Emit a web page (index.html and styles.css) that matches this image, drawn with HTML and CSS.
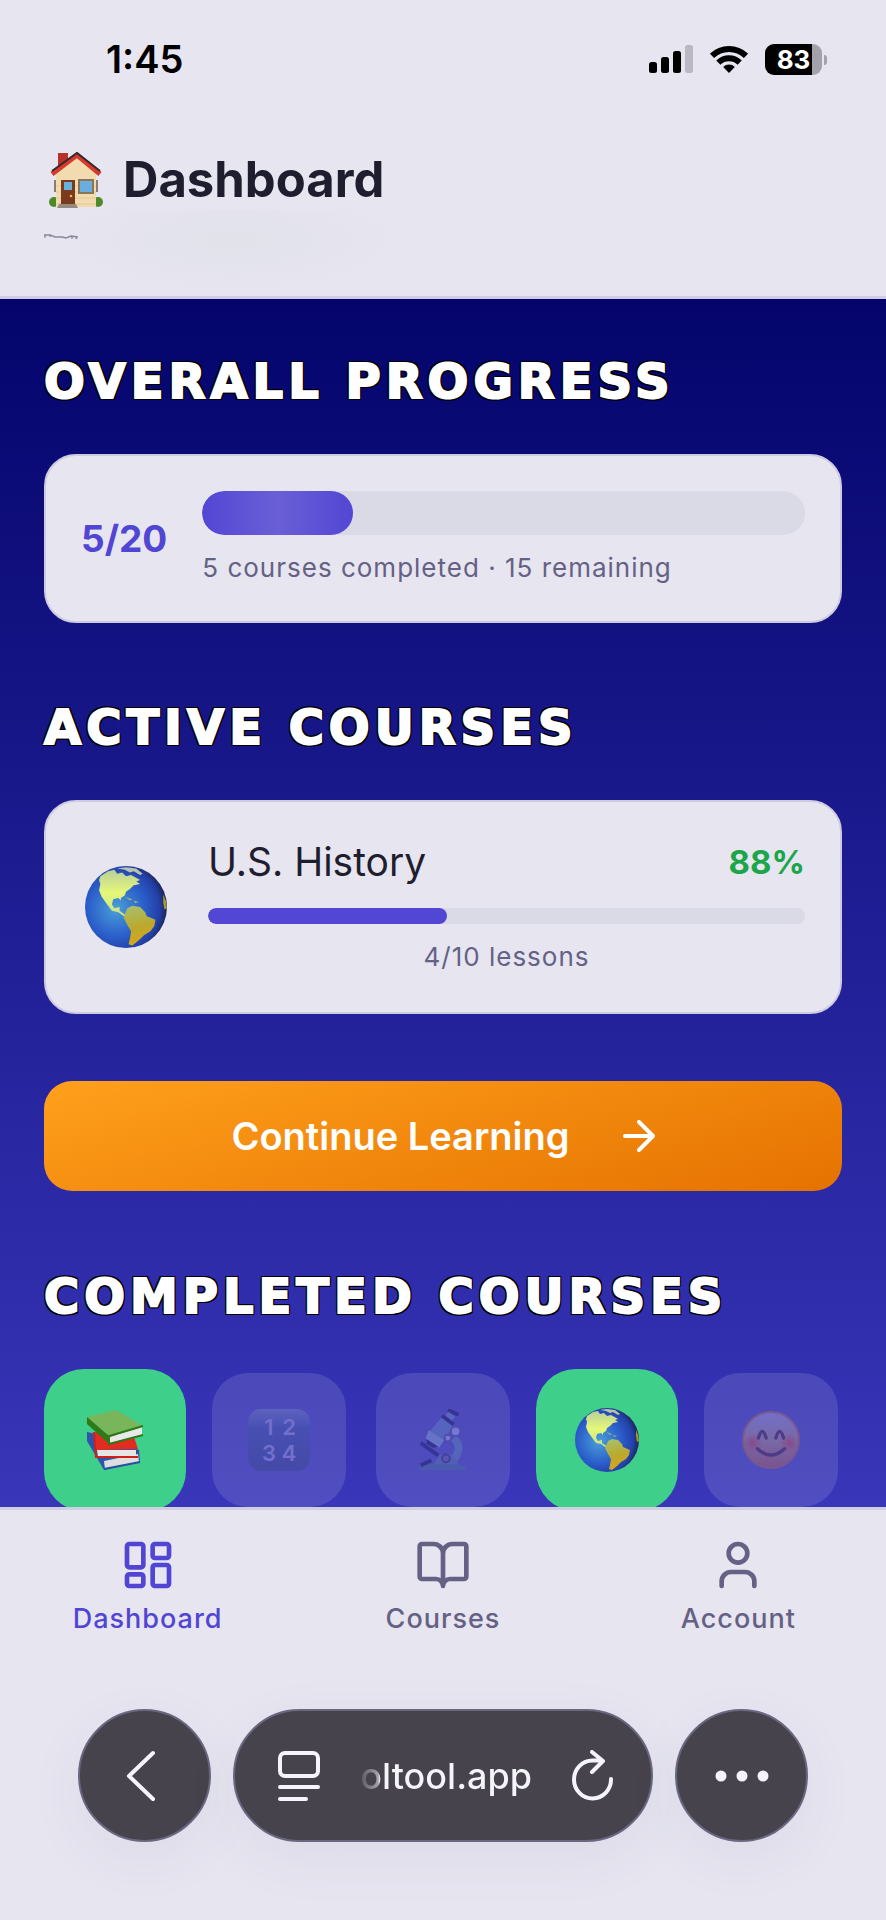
FILE: index.html
```html
<!DOCTYPE html>
<html lang="en">
<head>
    <meta charset="UTF-8">
    <meta name="viewport" content="width=device-width, initial-scale=1.0">
    <title>Dashboard</title>
    <link rel="stylesheet" href="styles.css">
</head>
<body>
    <!-- Shared drawings -->
    <svg class="defs" aria-hidden="true">
        <defs>
            <radialGradient id="ocean" cx="38%" cy="52%" r="62%">
                <stop offset="0" stop-color="#4a9fd8"/>
                <stop offset="0.55" stop-color="#2b5fcb"/>
                <stop offset="0.85" stop-color="#2340a8"/>
                <stop offset="1" stop-color="#1d2455"/>
            </radialGradient>
            <linearGradient id="north" x1="0" y1="0" x2="0" y2="1">
                <stop offset="0" stop-color="#b9cf9a"/>
                <stop offset="0.5" stop-color="#e6f878"/>
                <stop offset="1" stop-color="#c5e08a"/>
            </linearGradient>
            <linearGradient id="south" x1="0" y1="0" x2="0.2" y2="1">
                <stop offset="0" stop-color="#a5c272"/>
                <stop offset="0.6" stop-color="#bca82c"/>
                <stop offset="1" stop-color="#d6a71c"/>
            </linearGradient>
            <symbol id="globe" viewBox="0 0 64 64">
                <circle cx="32" cy="32" r="32" fill="url(#ocean)"/>
                <path fill="url(#north)" d="M12 8l6-4 5-1 2 3 4-1 3 3 4-1 7 4-3 1 3 2-5 1-3 3-3 2-1 3-3 2 0 2-2-2-4 1-1 4 2 3 4-1 0 3 3 2 3 2-3 0-4-3-5-1-3-4-5-7-2-5 1-5-1-3z"/>
                <path fill="url(#south)" d="M33 33l4-2 6 1 4 4 1 3 7 3-1 5-3 4-5 3-4 4-5 4-3-1 1-4 1-6-3-5-3-6z"/>
                <path fill="#8fb57a" d="M31 24l6 2-2 1zM38 27l4 1-3 1z"/>
                <path fill="#a59a2c" d="M61 22l2 5 1 6-2 1-1-6z"/>
                <path fill="#b9c4ae" d="M25 2l7-1 8 1 5 4-2 1-5-3-3 1-4-2z"/>
            </symbol>
        </defs>
    </svg>

    <header class="top">
        <div class="status">
            <span class="time">1:45</span>
            <div class="status-icons">
                <svg width="44" height="28" viewBox="0 0 44 28" aria-hidden="true">
                    <rect x="0" y="17" width="8" height="11" rx="2.5"/>
                    <rect x="12" y="12" width="8" height="16" rx="2.5"/>
                    <rect x="24" y="6" width="8" height="22" rx="2.5"/>
                    <rect x="36" y="0" width="8" height="28" rx="2.5" fill="#bab8c3"/>
                </svg>
                <svg width="38" height="28" viewBox="0 0 38 28" aria-hidden="true">
                    <g fill="none" stroke="#000" stroke-width="6">
                        <path d="M2 10.8a24.5 24.5 0 0 1 34 0"/>
                        <path d="M8.3 17.6a15.5 15.5 0 0 1 21.4 0"/>
                    </g>
                    <path d="M19 28l-5.8-6a8 8 0 0 1 11.6 0z"/>
                </svg>
                <div class="battery"><span>83</span></div>
            </div>
        </div>
        <div class="title-row">
            <svg class="house" viewBox="0 0 54 56" aria-hidden="true">
                <path d="M9 1h10v17l-10 8z" fill="#b8322b"/>
                <circle cx="5" cy="50" r="5" fill="#4f8a2a"/>
                <circle cx="49" cy="50" r="5" fill="#4f8a2a"/>
                <path d="M7 21L28 3l19 18v34H7z" fill="#f2dbae"/>
                <path d="M7 34h40M7 40h40M7 46h40M7 52h40" stroke="#e3c896"/>
                <path d="M3 22L28 3l23 19" fill="none" stroke="#d9382e" stroke-width="5"/>
                <path d="M3 19L28 1l23 18" fill="none" stroke="#332a2c" stroke-width="2"/>
                <path d="M12 28h14v24H12z" fill="#7a3a20"/>
                <path d="M15 30h8v8h-8z" fill="#68b1dc"/>
                <circle cx="22" cy="44" r="1.3" fill="#f5b92c"/>
                <path d="M30 28h14v13H30z" fill="#69aede" stroke="#8c7458" stroke-width="2"/>
                <path d="M6 28v12M48 28v12" stroke="#8c7c74" stroke-width="2"/>
                <path d="M10 52h17l2 4H8z" fill="#978b80"/>
            </svg>
            <h1>Dashboard</h1>
        </div>
        <div class="smudge">
            <svg width="34" height="6" viewBox="0 0 34 6" aria-hidden="true">
                <path d="M0 1h6l5 2h7l4 1 5-2 6 1-1 2" fill="none" stroke="#8a889b" stroke-width="1.6"/>
                <path d="M1 1v3M6 1v2M28 2v3" stroke="#77758a" stroke-width="1"/>
            </svg>
        </div>
    </header>

    <main>
        <h2>OVERALL PROGRESS</h2>
        <section class="card overall">
            <span class="count">5/20</span>
            <div class="overall-info">
                <div class="bar bar-big"><div class="fill" style="width: 25%"></div></div>
                <p class="note">5 courses completed · 15 remaining</p>
            </div>
        </section>

        <h2>ACTIVE COURSES</h2>
        <section class="card course">
            <svg class="course-icon" aria-hidden="true"><use href="#globe"/></svg>
            <div class="course-info">
                <div class="course-head">
                    <h3>U.S. History</h3>
                    <span class="score">88%</span>
                </div>
                <div class="bar"><div class="fill" style="width: 40%"></div></div>
                <p class="note">4/10 lessons</p>
            </div>
        </section>

        <button class="continue" type="button">
            Continue Learning
            <svg width="32" height="32" viewBox="0 0 32 32" aria-hidden="true">
                <path d="M2 16h28M16 2l14 14-14 14"/>
            </svg>
        </button>

        <h2>COMPLETED COURSES</h2>
        <div class="badges">
            <div class="badge done">
                <svg width="58" height="60" viewBox="0 0 58 60" aria-hidden="true">
                    <path d="M1 22l9 2 43 16 1 12-36 8L1 31z" fill="#2f54ab"/>
                    <path d="M18 51l34-7 1 8-34 7z" fill="#dedede"/>
                    <path d="M18 59l36-7" stroke="#2a4da5" stroke-width="2"/>
                    <path d="M9 22l39 5 4 12-42 1z" fill="#e32c20"/>
                    <path d="M11 40h39v7H12z" fill="#e6e6e6"/>
                    <path d="M8 22l2 25h42" fill="none" stroke="#cf2118" stroke-width="2"/>
                    <path d="M1 7L30 0l27 16-34 10z" fill="#79b55a"/>
                    <path d="M1 7l22 19v8L1 14z" fill="#2c7a18"/>
                    <path d="M24 27l32-10v8l-32 8z" fill="#e9e9e9"/>
                    <path d="M57 16L23 26v8l34-9" fill="none" stroke="#2c7a18" stroke-width="2"/>
                </svg>
            </div>
            <div class="badge">
                <div class="numbers"><span>1</span><span>2</span><span>3</span><span>4</span></div>
            </div>
            <div class="badge">
                <svg width="50" height="62" viewBox="8 0 50 64" aria-hidden="true">
                    <path d="M44 30c9 8 5 20-5 25" fill="none" stroke="#5565bb" stroke-width="8"/>
                    <path d="M24 56l6-9h12l8 11H20z" fill="#515fb4"/>
                    <path d="M9 59q24-5 47 0v4H8z" fill="#4a5bae"/>
                    <path d="M10 35l18 13M10 58l11-5" stroke="#373594" stroke-width="4"/>
                    <path d="M32 8l12 9-13 20-15-10z" fill="#5564bf"/>
                    <path d="M18 22l16 10-5 8-14-9z" fill="#6673c6"/>
                    <path d="M16 31l12 8-5 1-7-4z" fill="#353493"/>
                    <path d="M32 7l12 9M38 1l11 5" stroke="#353493" stroke-width="4"/>
                    <path d="M37 5l7 5" stroke="#5966bf" stroke-width="5"/>
                    <circle cx="46" cy="23" r="5" fill="#7776d2" stroke="#4c4fae" stroke-width="2"/>
                    <circle cx="38" cy="30" r="3.5" fill="#7776d2" stroke="#4c4fae" stroke-width="2"/>
                    <circle cx="36" cy="51" r="4" fill="#5b57b0" stroke="#423f9d" stroke-width="2"/>
                </svg>
            </div>
            <div class="badge done">
                <svg width="64" height="64" aria-hidden="true"><use href="#globe"/></svg>
            </div>
            <div class="badge">
                <svg width="58" height="58" viewBox="0 0 60 60" aria-hidden="true">
                    <defs>
                        <linearGradient id="face" x1="0" y1="0" x2="0" y2="1">
                            <stop offset="0" stop-color="#736ecb"/>
                            <stop offset="0.5" stop-color="#786aa6"/>
                            <stop offset="1" stop-color="#79528e"/>
                        </linearGradient>
                        <radialGradient id="blush">
                            <stop offset="0" stop-color="#87498b"/>
                            <stop offset="1" stop-color="#87498b" stop-opacity="0"/>
                        </radialGradient>
                    </defs>
                    <circle cx="30" cy="30" r="29" fill="url(#face)" stroke="#79588f" stroke-width="2"/>
                    <circle cx="11" cy="33" r="10" fill="url(#blush)"/>
                    <circle cx="49" cy="33" r="10" fill="url(#blush)"/>
                    <g fill="none" stroke="#4d3b87" stroke-width="3.4" stroke-linecap="round">
                        <path d="M17 28q4-14 8 0M35 28q4-14 8 0"/>
                        <path d="M16 39q14 13 28 0"/>
                    </g>
                </svg>
            </div>
        </div>
    </main>

    <footer>
        <nav>
            <a class="active" href="#dashboard">
                <svg viewBox="0 0 24 24" aria-hidden="true">
                    <rect x="3" y="3" width="7" height="10" rx="1"/>
                    <rect x="14" y="3" width="7" height="6" rx="1"/>
                    <rect x="14" y="12" width="7" height="9" rx="1"/>
                    <rect x="3" y="16" width="7" height="5" rx="1"/>
                </svg>
                Dashboard
            </a>
            <a href="#courses">
                <svg viewBox="0 0 24 24" aria-hidden="true">
                    <path d="M12 7v14M3 18a1 1 0 0 1-1-1V4a1 1 0 0 1 1-1h5a4 4 0 0 1 4 4 4 4 0 0 1 4-4h5a1 1 0 0 1 1 1v13a1 1 0 0 1-1 1h-6a3 3 0 0 0-3 3 3 3 0 0 0-3-3z"/>
                </svg>
                Courses
            </a>
            <a href="#account">
                <svg viewBox="0 0 24 24" aria-hidden="true">
                    <path d="M19 21v-2a4 4 0 0 0-4-4H9a4 4 0 0 0-4 4v2"/>
                    <circle cx="12" cy="7" r="4"/>
                </svg>
                Account
            </a>
        </nav>
        <div class="browser">
            <button class="round back" type="button" aria-label="Back">
                <svg width="30" height="52" viewBox="0 0 30 52" aria-hidden="true">
                    <path d="M27 3L3 26l24 23"/>
                </svg>
            </button>
            <div class="address">
                <button type="button" aria-label="Page menu">
                    <svg width="44" height="52" viewBox="0 0 44 52" aria-hidden="true">
                        <rect x="3" y="3" width="38" height="23" rx="5"/>
                        <path d="M3 37h38M3 49h26"/>
                    </svg>
                </button>
                <span class="url">oltool.app</span>
                <button type="button" aria-label="Reload">
                    <svg width="44" height="52" viewBox="0 0 44 52" aria-hidden="true">
                        <path d="M40 29a18.5 19 0 1 1-18.5-18.5H31M21 2l11 9-11 11"/>
                    </svg>
                </button>
            </div>
            <button class="round" type="button" aria-label="More">
                <svg class="dots" width="54" height="12" viewBox="0 0 54 12" aria-hidden="true">
                    <circle cx="6" cy="6" r="5.5"/>
                    <circle cx="27" cy="6" r="5.5"/>
                    <circle cx="48" cy="6" r="5.5"/>
                </svg>
            </button>
        </div>
    </footer>
</body>
</html>
```
FILE: styles.css
```css
* {
    box-sizing: border-box;
    margin: 0;
    padding: 0;
}
body {
    display: flex;
    flex-direction: column;
    height: 100vh;
    overflow: hidden;
    background-color: #e6e5f0;
    color: #1f1e2e;
    font-family: Inter, Roboto, sans-serif;
}
svg {
    display: block;
    flex-shrink: 0;
}
button {
    border: none;
    background: none;
    font-family: inherit;
    cursor: pointer;
}
.defs {
    position: absolute;
    width: 0;
    height: 0;
}

/* Header */
.top {
    padding: 40px 44px 0;
    border-bottom: 3px solid #d0cfdf;
}
.status {
    display: flex;
    justify-content: space-between;
    align-items: center;
    height: 38px;
    padding: 0 20px 0 62px;
    color: #000;
}
.time {
    font-size: 38px;
    line-height: 38px;
    font-weight: 600;
}
.status-icons {
    display: flex;
    align-items: center;
    gap: 17px;
}
.battery {
    position: relative;
    width: 57px;
    height: 31px;
    border-radius: 9px;
    background: linear-gradient(90deg, #000 83%, #a3a2aa 83%);
    color: #fff;
    font-size: 26px;
    line-height: 31px;
    font-weight: 700;
    text-align: center;
}
.battery::after {
    content: "";
    position: absolute;
    right: -5px;
    top: 11px;
    width: 3px;
    height: 10px;
    border-radius: 0 3px 3px 0;
    background-color: #a3a2aa;
}
.title-row {
    display: flex;
    align-items: center;
    gap: 20px;
    height: 60px;
    margin-top: 72px;
    padding-left: 5px;
}
.house {
    width: 54px;
    height: 56px;
}
h1 {
    font-size: 49px;
    line-height: 60px;
    font-weight: 700;
}
.smudge {
    width: 340px;
    height: 86px;
    padding-top: 24px;
    background: radial-gradient(ellipse at 55% 35%, #e2e2eb, #e6e5f0 65%);
}

/* Content */
main {
    flex: 1;
    min-height: 0;
    overflow: hidden;
    padding: 51px 44px 0;
    background: linear-gradient(#04046c, #3936b9);
}
h2 {
    margin-bottom: 42px;
    color: #fff;
    font-family: "DejaVu Sans", sans-serif;
    font-size: 48px;
    line-height: 62px;
    font-weight: 700;
    letter-spacing: 5px;
    white-space: nowrap;
    -webkit-text-stroke: 2px #fff;
    text-shadow: 2px 0 #000, -2px 0 #000, 0 2px #000, 0 -2px #000,
        2px 2px #000, -2px 2px #000, 2px -2px #000, -2px -2px #000;
}
.card {
    display: flex;
    align-items: center;
    padding: 0 35px;
    border: 2px solid #cdcbe0;
    border-radius: 32px;
    background-color: #e6e5f0;
}
.overall {
    height: 169px;
    margin-bottom: 73px;
    gap: 35px;
}
.count {
    color: #5146d3;
    font-size: 37px;
    line-height: 48px;
    font-weight: 700;
}
.overall-info, .course-info {
    flex: 1;
}
.bar {
    height: 16px;
    border-radius: 22px;
    background-color: #dad9e6;
    overflow: hidden;
}
.bar-big {
    height: 44px;
}
.fill {
    height: 100%;
    border-radius: 22px;
    background-color: #5246d4;
}
.bar-big .fill {
    background: linear-gradient(90deg, #5246d4, #6a5fd6, #5246d4);
}
.note {
    margin-top: 14px;
    color: #646185;
    font-size: 26px;
    line-height: 38px;
    letter-spacing: 1px;
}
.course {
    height: 214px;
    margin-bottom: 67px;
    gap: 41px;
}
.course-icon {
    width: 82px;
    height: 82px;
    margin-left: 4px;
}
.course-info .note {
    text-align: center;
}
.course-head {
    display: flex;
    justify-content: space-between;
    align-items: center;
    margin-bottom: 22px;
}
h3 {
    font-size: 39px;
    line-height: 48px;
    font-weight: 400;
}
.score {
    color: #1ba64b;
    font-size: 33px;
    line-height: 48px;
    font-weight: 700;
}
.continue {
    display: flex;
    justify-content: center;
    align-items: center;
    gap: 53px;
    width: 100%;
    height: 110px;
    margin-bottom: 74px;
    border-radius: 28px;
    background: linear-gradient(165deg, #ffa01c, #e57200);
    color: #fff;
    font-size: 38px;
    font-weight: 600;
}
.continue svg {
    fill: none;
    stroke: #fff;
    stroke-width: 4;
    stroke-linecap: round;
    stroke-linejoin: round;
}
.badges {
    display: grid;
    grid-template-columns: repeat(5, 1fr);
    gap: 22px;
}
.badge {
    display: flex;
    justify-content: center;
    align-items: center;
    aspect-ratio: 1;
    margin: 4px;
    border-radius: 36px;
    background-color: rgba(230, 229, 240, 0.14);
}
.badge.done {
    margin: 0;
    border-radius: 40px;
    background-color: #3ecf8a;
}
.numbers {
    display: grid;
    grid-template-columns: 20px 20px;
    justify-content: center;
    align-content: center;
    width: 62px;
    height: 62px;
    border-radius: 13px;
    background: linear-gradient(#5e62c0, #4750b2 30%, #4549a8);
    color: #7370cd;
    font-size: 22px;
    line-height: 26px;
    font-weight: 600;
    text-align: center;
}

/* Bottom navigation */
footer {
    border-top: 3px solid #d0cfdf;
}
nav {
    display: grid;
    grid-template-columns: repeat(3, 1fr);
    padding-top: 27px;
}
nav a {
    display: flex;
    flex-direction: column;
    align-items: center;
    gap: 8px;
    color: #646185;
    font-size: 27px;
    line-height: 36px;
    font-weight: 500;
    letter-spacing: 1px;
    text-decoration: none;
}
nav a.active {
    color: #5146d3;
}
nav svg {
    width: 56px;
    height: 56px;
    fill: none;
    stroke: currentColor;
    stroke-width: 2;
    stroke-linecap: round;
    stroke-linejoin: round;
}

/* Browser bar */
.browser {
    display: flex;
    gap: 22px;
    margin-top: 72px;
    padding: 0 78px 78px;
}
.browser button {
    display: flex;
    justify-content: center;
    align-items: center;
}
.round, .address {
    height: 133px;
    border: 2px solid #6a6780;
    border-radius: 67px;
    background-color: #46434d;
    box-shadow: 0 16px 60px rgba(70, 67, 110, 0.06);
}
.browser .round {
    width: 133px;
    border: 2px solid #6a6780;
    background-color: #46434d;
}
.browser .back {
    padding-right: 8px;
}
.address {
    display: flex;
    flex: 1;
    justify-content: space-between;
    align-items: center;
    padding: 0 36px 0 42px;
}
.browser svg {
    fill: none;
    stroke: #f5f4fa;
    stroke-width: 4;
    stroke-linecap: round;
    stroke-linejoin: round;
}
.browser .dots {
    fill: #f5f4fa;
    stroke: none;
}
.url {
    margin-left: auto;
    margin-right: 39px;
    background: linear-gradient(90deg, #5a5761, #a19fa7 18px, #f5f4fa 20px);
    background-clip: text;
    color: transparent;
    font-size: 36px;
    line-height: 48px;
    font-weight: 500;
}
```
